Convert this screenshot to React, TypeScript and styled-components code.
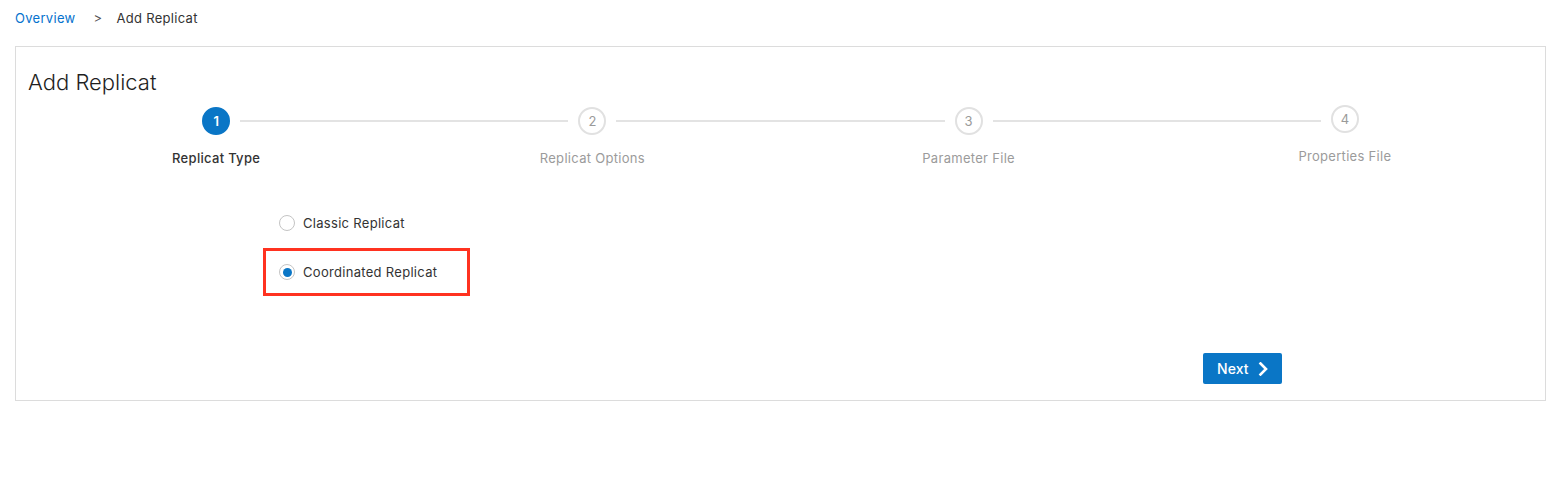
import React, { useState } from "react";
import styled, { createGlobalStyle } from "styled-components";

const GlobalStyle = createGlobalStyle`
  html, body { margin: 0; padding: 0; background: #fff; }
  body {
    font-family: Inter, "Noto Sans", "Liberation Sans", sans-serif;
    color: #333;
    letter-spacing: 0.3px;
    -webkit-font-smoothing: antialiased;
  }
  * { box-sizing: border-box; }
`;

const BLUE = "#0a76c6";

const Page = styled.div`
  padding: 0 12px 0 15px;
`;

const Breadcrumb = styled.nav`
  display: flex;
  align-items: center;
  padding-top: 9px;
  height: 27px;
  font-size: 13px;
  line-height: 18px;
`;

const CrumbLink = styled.a`
  color: #0572ce;
  text-decoration: none;
`;

const CrumbSep = styled.span`
  color: #555;
  margin: 0 14px 0 18px;
`;

const CrumbCurrent = styled.span`
  color: #333;
`;

const Card = styled.section`
  margin-top: 19px;
  border: 1px solid #dcdcdc;
  padding: 21px 12px 16px 12px;
`;

const Title = styled.h1`
  margin: 0;
  font-size: 22px;
  line-height: 28px;
  font-weight: 300;
  color: #1f1f1f;
  letter-spacing: 0;
`;

const Stepper = styled.ol`
  list-style: none;
  margin: 11px 0 0 0;
  padding: 0;
  display: grid;
  grid-template-columns: repeat(4, 1fr);
`;

const Step = styled.li<{ $last?: boolean; $shift?: number }>`
  position: relative;
  display: flex;
  flex-direction: column;
  align-items: center;
  margin-top: ${(p) => (p.$shift ? `${p.$shift}px` : "0")};

  &::after {
    content: "";
    display: ${(p) => (p.$last ? "none" : "block")};
    position: absolute;
    top: 13px;
    left: calc(50% + 24px);
    width: calc(100% - 48px);
    height: 2px;
    background: #e3e3e3;
  }
`;

const StepCircle = styled.span<{ $active?: boolean }>`
  width: 28px;
  height: 28px;
  border-radius: 50%;
  display: flex;
  align-items: center;
  justify-content: center;
  font-size: 13px;
  letter-spacing: 0;
  font-weight: ${(p) => (p.$active ? 600 : 400)};
  color: ${(p) => (p.$active ? "#fff" : "#9a9a9a")};
  background: ${(p) => (p.$active ? BLUE : "#fff")};
  border: 2px solid ${(p) => (p.$active ? BLUE : "#e1e1e1")};
`;

const StepLabel = styled.span<{ $active?: boolean }>`
  margin-top: 14px;
  font-size: 13px;
  line-height: 18px;
  font-weight: ${(p) => (p.$active ? 500 : 400)};
  color: ${(p) => (p.$active ? "#333" : "#9b9b9b")};
`;

const FormArea = styled.div`
  padding: 0 251px 0 251px;
`;

const RadioGroup = styled.div`
  margin-top: 32px;
  display: flex;
  flex-direction: column;
  align-items: flex-start;
  gap: 1px;
`;

const RadioRow = styled.label<{ $highlight?: boolean }>`
  display: inline-flex;
  align-items: center;
  height: 48px;
  margin-left: -16px;
  padding: 0 30px 0 13px;
  border: 3px solid ${(p) => (p.$highlight ? "#ff3220" : "transparent")};
  cursor: pointer;
  font-size: 13px;
  color: #333;
`;

const RadioCircle = styled.span<{ $checked?: boolean }>`
  width: 16px;
  height: 16px;
  border-radius: 50%;
  border: 1px solid #c4c4c4;
  background: #fff;
  display: flex;
  align-items: center;
  justify-content: center;
  margin-right: 8px;
  flex: none;

  &::after {
    content: "";
    width: 9px;
    height: 9px;
    border-radius: 50%;
    background: ${(p) => (p.$checked ? BLUE : "transparent")};
  }
`;

const Footer = styled.div`
  margin-top: 57px;
  display: flex;
  justify-content: flex-end;
`;

const NextButton = styled.button`
  display: inline-flex;
  align-items: center;
  height: 31px;
  width: 79px;
  padding: 0 0 0 14px;
  border: none;
  border-radius: 2px;
  background: ${BLUE};
  color: #fff;
  font-family: inherit;
  font-size: 14px;
  font-weight: 500;
  letter-spacing: 0.1px;
  cursor: pointer;

  svg {
    margin-left: 9px;
  }
`;

const steps = [
  { n: 1, label: "Replicat Type" },
  { n: 2, label: "Replicat Options" },
  { n: 3, label: "Parameter File" },
  { n: 4, label: "Properties File" },
];

export default function App() {
  const [type, setType] = useState("coordinated");
  return (
    <>
      <GlobalStyle />
      <Page>
        <Breadcrumb>
          <CrumbLink href="#">Overview</CrumbLink>
          <CrumbSep>&gt;</CrumbSep>
          <CrumbCurrent>Add Replicat</CrumbCurrent>
        </Breadcrumb>
        <Card>
          <Title>Add Replicat</Title>
          <Stepper>
            {steps.map((s, i) => (
              <Step key={s.n} $last={i === steps.length - 1} $shift={i === 3 ? -2 : 0}>
                <StepCircle $active={i === 0}>{s.n}</StepCircle>
                <StepLabel $active={i === 0}>{s.label}</StepLabel>
              </Step>
            ))}
          </Stepper>
          <FormArea>
            <RadioGroup>
              <RadioRow onClick={() => setType("classic")}>
                <RadioCircle $checked={type === "classic"} />
                Classic Replicat
              </RadioRow>
              <RadioRow $highlight onClick={() => setType("coordinated")}>
                <RadioCircle $checked={type === "coordinated"} />
                Coordinated Replicat
              </RadioRow>
            </RadioGroup>
            <Footer>
              <NextButton>
                Next
                <svg width="11" height="14" viewBox="0 0 11 14" fill="none">
                  <path d="M2.5 1.5 L8 7 L2.5 12.5" stroke="#fff" strokeWidth="2.6" strokeLinecap="square" />
                </svg>
              </NextButton>
            </Footer>
          </FormArea>
        </Card>
      </Page>
    </>
  );
}
